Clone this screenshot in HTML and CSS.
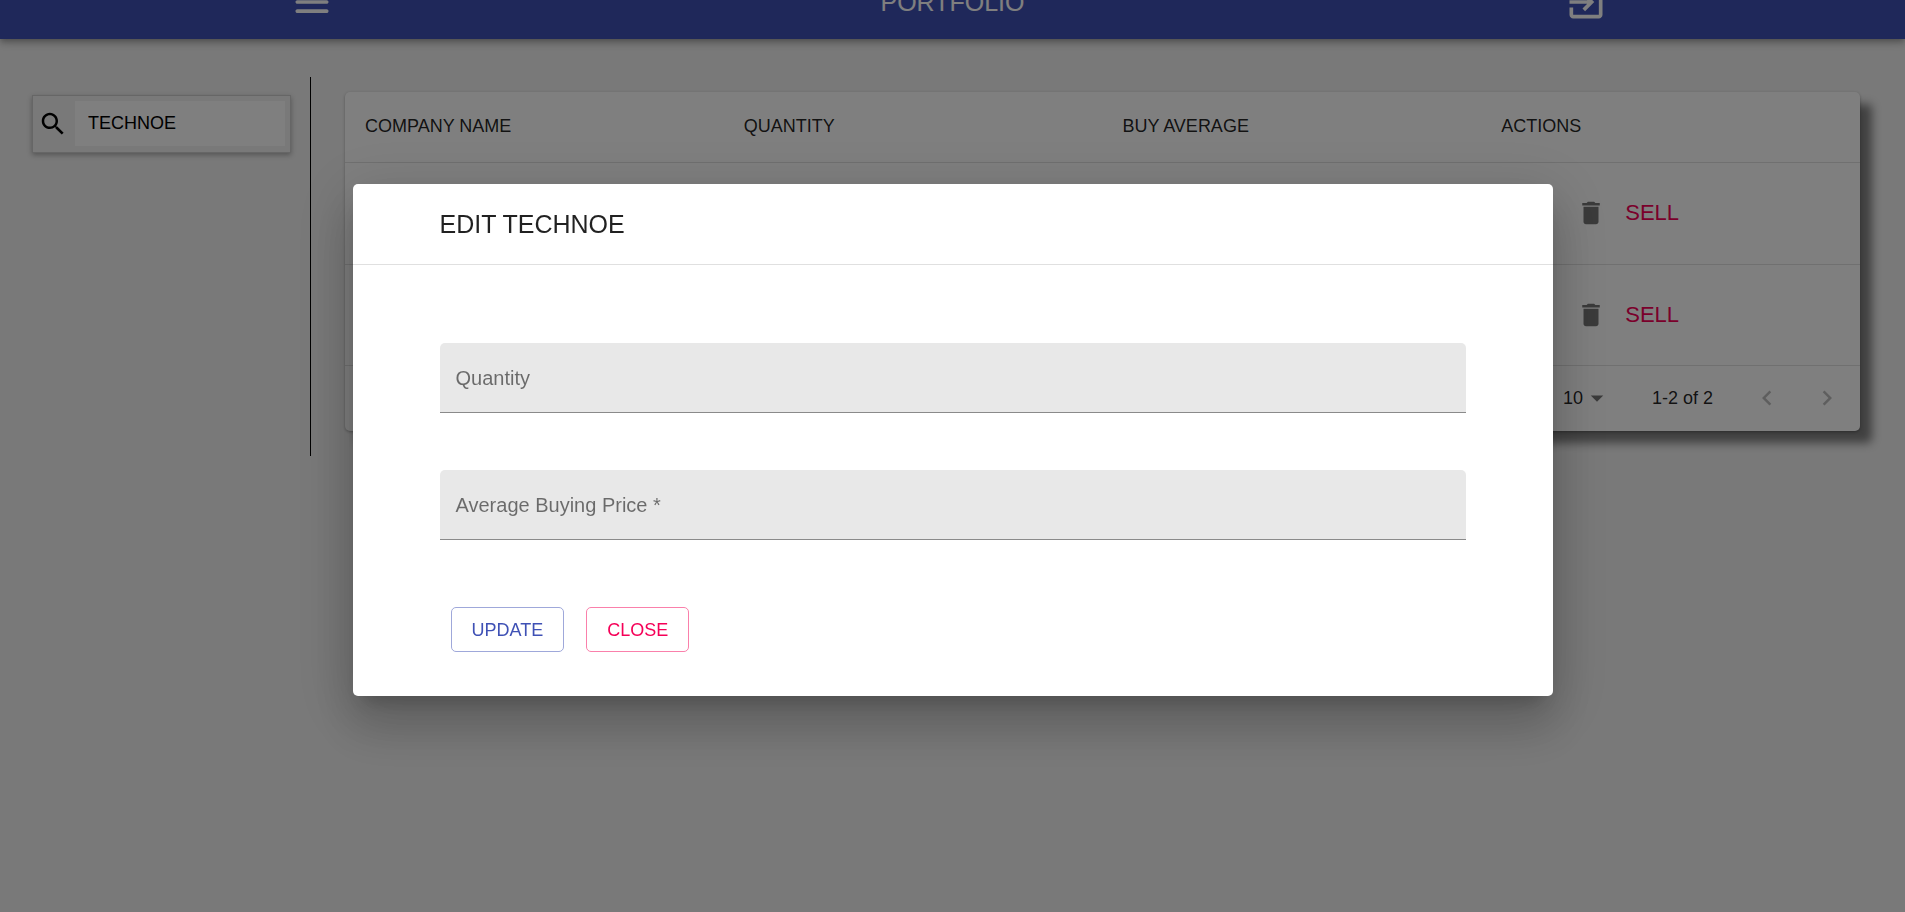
FILE: index.html
```html
<!DOCTYPE html>
<html lang="en">
<head>
<meta charset="utf-8">
<title>Portfolio</title>
<link rel="stylesheet" href="styles.css">
</head>
<body>
<header class="appbar">
  <button class="appbar-btn menu-btn" type="button" aria-label="Menu">
    <svg class="icon-lg" viewBox="0 0 24 24"><path d="M4 18h16c.55 0 1-.45 1-1s-.45-1-1-1H4c-.55 0-1 .45-1 1s.45 1 1 1zm0-5h16c.55 0 1-.45 1-1s-.45-1-1-1H4c-.55 0-1 .45-1 1s.45 1 1 1zM3 7c0 .55.45 1 1 1h16c.55 0 1-.45 1-1s-.45-1-1-1H4c-.55 0-1 .45-1 1z"/></svg>
  </button>
  <h1 class="appbar-title">PORTFOLIO</h1>
  <button class="appbar-btn exit-btn" type="button" aria-label="Log out">
    <svg class="icon-lg" viewBox="0 0 24 24"><path d="M10.09 15.59L11.5 17l5-5-5-5-1.41 1.41L12.67 11H3v2h9.67l-2.58 2.59zM19 3H5c-1.11 0-2 .9-2 2v4h2V5h14v14H5v-4H3v4c0 1.1.89 2 2 2h14c1.1 0 2-.9 2-2V5c0-1.1-.9-2-2-2z"/></svg>
  </button>
</header>

<main class="page">
  <aside class="sidebar">
    <div class="search">
      <label class="search-label" for="search" aria-label="Search company">
        <svg class="icon" viewBox="0 0 24 24"><path d="M15.5 14h-.79l-.28-.27C15.41 12.59 16 11.11 16 9.5 16 5.91 13.09 3 9.5 3S3 5.91 3 9.5 5.91 16 9.5 16c1.61 0 3.09-.59 4.23-1.57l.27.28v.79l5 4.99L20.49 19l-4.99-5zm-6 0C7.01 14 5 11.99 5 9.5S7.01 5 9.5 5 14 7.01 14 9.5 11.99 14 9.5 14z"/></svg>
      </label>
      <input class="search-input" id="search" type="text" value="TECHNOE">
    </div>
  </aside>

  <section class="holdings">
    <div class="card">
      <table class="table">
        <thead>
          <tr><th>COMPANY NAME</th><th>QUANTITY</th><th>BUY AVERAGE</th><th>ACTIONS</th></tr>
        </thead>
        <tbody>
          <tr>
            <td></td><td></td><td></td>
            <td>
              <div class="actions">
                <button class="icon-btn" type="button" aria-label="Edit"><svg class="icon" viewBox="0 0 24 24"><path d="M3 17.25V21h3.75L17.81 9.94l-3.75-3.75L3 17.25zM20.71 7.04a1 1 0 000-1.41l-2.34-2.34a1 1 0 00-1.41 0l-1.83 1.83 3.75 3.75 1.83-1.83z"/></svg></button>
                <button class="icon-btn" type="button" aria-label="Delete"><svg class="icon" viewBox="0 0 24 24"><path d="M6 19c0 1.1.9 2 2 2h8c1.1 0 2-.9 2-2V7H6v12zM19 4h-3.500l-1-1h-5l-1 1H5v2h14V4z"/></svg></button>
                <button class="sell" type="button">SELL</button>
              </div>
            </td>
          </tr>
          <tr>
            <td></td><td></td><td></td>
            <td>
              <div class="actions">
                <button class="icon-btn" type="button" aria-label="Edit"><svg class="icon" viewBox="0 0 24 24"><path d="M3 17.25V21h3.75L17.81 9.94l-3.75-3.75L3 17.25zM20.71 7.04a1 1 0 000-1.41l-2.34-2.34a1 1 0 00-1.41 0l-1.83 1.83 3.75 3.75 1.83-1.83z"/></svg></button>
                <button class="icon-btn" type="button" aria-label="Delete"><svg class="icon" viewBox="0 0 24 24"><path d="M6 19c0 1.1.9 2 2 2h8c1.1 0 2-.9 2-2V7H6v12zM19 4h-3.500l-1-1h-5l-1 1H5v2h14V4z"/></svg></button>
                <button class="sell" type="button">SELL</button>
              </div>
            </td>
          </tr>
        </tbody>
      </table>
      <div class="pagination">
        <div class="select-wrap">
          <select class="select" aria-label="Rows per page"><option>10</option><option>25</option></select>
          <svg class="icon select-arrow" viewBox="0 0 24 24"><path d="M7 10l5 5 5-5z"/></svg>
        </div>
        <span class="range">1-2 of 2</span>
        <button class="icon-btn" type="button" disabled aria-label="Previous page"><svg class="icon" viewBox="0 0 24 24"><path d="M15.41 16.59L10.83 12l4.58-4.590L14 6l-6 6 6 6 1.410-1.410z"/></svg></button>
        <button class="icon-btn" type="button" disabled aria-label="Next page"><svg class="icon" viewBox="0 0 24 24"><path d="M8.590 16.590L13.170 12 8.590 7.410 10 6l6 6-6 6-1.410-1.410z"/></svg></button>
      </div>
    </div>
  </section>
</main>

<div class="backdrop">
  <form class="dialog" role="dialog" aria-modal="true" aria-labelledby="dialog-title">
    <h2 class="dialog-title" id="dialog-title">EDIT TECHNOE</h2>
    <div class="dialog-body">
      <div class="field">
        <label class="field-label" for="quantity">Quantity</label>
        <input class="field-input" id="quantity" type="text">
      </div>
      <div class="field">
        <label class="field-label" for="price">Average Buying Price *</label>
        <input class="field-input" id="price" type="text" required>
      </div>
      <div class="dialog-actions">
        <button class="btn btn-primary" type="button">UPDATE</button>
        <button class="btn btn-secondary" type="button">CLOSE</button>
      </div>
    </div>
  </form>
</div>
</body>
</html>
```
FILE: styles.css
```css
* { box-sizing: border-box; }

body {
  margin: 0;
  min-height: 100vh;
  overflow: hidden;
  background: #f2f2f2;
  color: rgba(0, 0, 0, 0.87);
  font-family: "Liberation Sans", Arial, sans-serif;
  font-size: 18px;
}

button, input, select { font: inherit; color: inherit; }
button { border: 0; background: none; padding: 0; cursor: pointer; }
svg { display: block; fill: currentColor; }

.icon { width: 30px; height: 30px; }
.icon-lg { width: 44px; height: 44px; }

/* App bar, scrolled partly out of view */
.appbar {
  display: grid;
  grid-template-columns: 1fr 1fr 1fr;
  align-items: center;
  justify-items: center;
  height: 74px;
  margin-top: -35px;
  background: #3f51b5;
  color: #fff;
  box-shadow: 0 2px 5px -1px rgba(0, 0, 0, 0.2), 0 5px 6px rgba(0, 0, 0, 0.14), 0 1px 12px rgba(0, 0, 0, 0.12);
}
.menu-btn { margin-right: 12px; }
.exit-btn { margin-right: 4px; }
.appbar-title { margin: 0; font-size: 25px; font-weight: 400; line-height: 40px; }

.page { display: flex; padding-top: 38px; }

.sidebar {
  flex: none;
  width: 311px;
  height: 379px;
  padding: 18px 19px 0 32px;
  border-right: 1px solid #000;
}
.search {
  display: flex;
  align-items: center;
  height: 58px;
  padding: 0 5px;
  border: 1px solid #ccc;
  box-shadow: 0 2px 5px rgba(0, 0, 0, 0.3);
}
.search-label { flex: none; width: 37px; color: #000; }
.search-input {
  flex: 1;
  min-width: 0;
  height: 45px;
  margin-bottom: 2px;
  padding: 0 13px;
  border: 0;
  background: #fff;
  color: #000;
}

.holdings { flex: 1; padding: 15px 45px 0 34px; }
.card {
  border-radius: 5px;
  background: #fff;
  box-shadow: 0 1px 3px rgba(0, 0, 0, 0.3), 12px 12px 10px gray;
}
.table { width: 100%; table-layout: fixed; border-collapse: collapse; }
.table th, .table td {
  padding: 0 20px;
  border-bottom: 1px solid #e0e0e0;
  text-align: left;
  font-weight: 400;
}
.table th { height: 70px; }
.table td { height: 101px; }
.table tbody tr:first-child td { height: 102px; }
.actions { display: flex; align-items: center; }
.icon-btn { flex: none; padding: 15px; color: rgba(0, 0, 0, 0.54); }
.icon-btn:disabled { color: rgba(0, 0, 0, 0.26); }
.sell { padding: 0 4px; color: #f50057; font-size: 22px; }

.pagination {
  display: flex;
  align-items: center;
  justify-content: flex-end;
  height: 65px;
  padding-right: 3px;
}
.select-wrap { display: grid; align-items: center; width: 49px; margin-right: 40px; }
.select {
  grid-area: 1 / 1;
  width: 100%;
  padding: 0;
  border: 0;
  background: none;
  appearance: none;
}
.select-arrow { grid-area: 1 / 1; justify-self: end; color: rgba(0, 0, 0, 0.54); pointer-events: none; }
.range { margin-right: 24px; }

/* Modal */
.backdrop {
  position: fixed;
  inset: 0;
  display: flex;
  align-items: flex-start;
  justify-content: center;
  padding: 184px 40px 0;
  background: rgba(0, 0, 0, 0.5);
}
.dialog {
  width: 100%;
  max-width: 1200px;
  border-radius: 5px;
  background: #fff;
  box-shadow: 0 14px 19px -9px rgba(0, 0, 0, 0.2), 0 30px 48px 4px rgba(0, 0, 0, 0.14), 0 11px 58px 10px rgba(0, 0, 0, 0.12);
}
.dialog-title {
  margin: 0;
  padding: 20px 87px;
  border-bottom: 1px solid #e0e0e0;
  font-size: 25px;
  font-weight: 400;
  line-height: 40px;
}
.dialog-body { display: grid; gap: 57px; padding: 78px 87px 44px; }
.field { display: grid; align-items: center; }
.field-label {
  grid-area: 1 / 1;
  z-index: 1;
  padding-left: 16px;
  color: rgba(0, 0, 0, 0.54);
  font-size: 20px;
  pointer-events: none;
}
.field-input {
  grid-area: 1 / 1;
  width: 100%;
  height: 70px;
  padding: 0 16px;
  border: 0;
  border-bottom: 1px solid #8a8a8a;
  border-radius: 5px 5px 0 0;
  background: #e8e8e8;
  font-size: 20px;
}
.dialog-actions { display: flex; gap: 22px; padding: 10px 11px 0; }
.btn { height: 45px; padding: 1px 20px 0; border: 1px solid; border-radius: 5px; }
.btn-primary { border-color: #9fa8da; color: #3f51b5; }
.btn-secondary { border-color: #fa80ab; color: #f50057; }
```
